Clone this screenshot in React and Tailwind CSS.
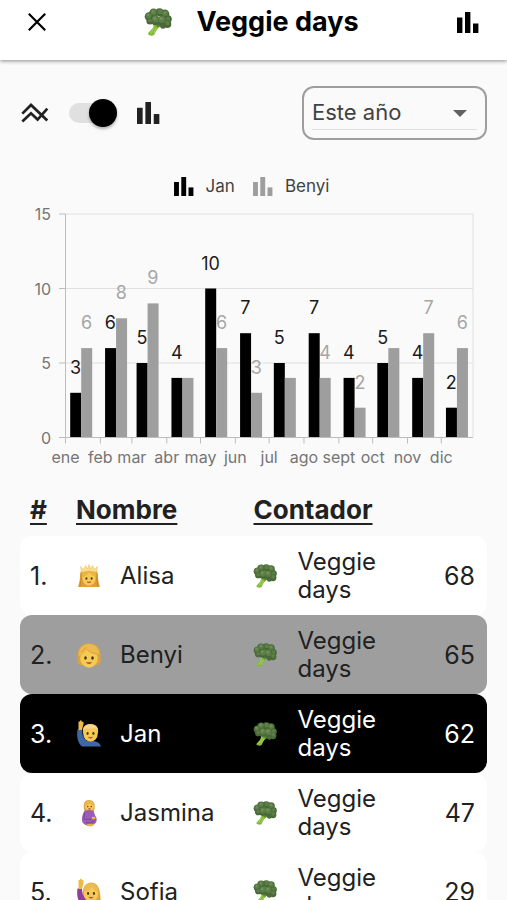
import { useState } from 'react';

const MONTHS = [
  { label: 'ene', days: 31, jan: 3, benyi: 6 },
  { label: 'feb', days: 28, jan: 6, benyi: 8 },
  { label: 'mar', days: 31, jan: 5, benyi: 9 },
  { label: 'abr', days: 30, jan: 4, benyi: 4, hideBenyi: true },
  { label: 'may', days: 31, jan: 10, benyi: 6 },
  { label: 'jun', days: 30, jan: 7, benyi: 3 },
  { label: 'jul', days: 31, jan: 5, benyi: 4, hideBenyi: true },
  { label: 'ago', days: 31, jan: 7, benyi: 4 },
  { label: 'sept', days: 30, jan: 4, benyi: 2 },
  { label: 'oct', days: 31, jan: 5, benyi: 6, hideBenyi: true },
  { label: 'nov', days: 30, jan: 4, benyi: 7 },
  { label: 'dic', days: 31, jan: 2, benyi: 6 },
];

const RANKING = [
  { name: 'Alisa', avatar: 'princess', count: 68, tone: 'bg-white text-[#212121]' },
  { name: 'Benyi', avatar: 'blond', count: 65, tone: 'bg-[#9e9e9e] text-[#212121]' },
  { name: 'Jan', avatar: 'manHand', count: 62, tone: 'bg-black text-white' },
  { name: 'Jasmina', avatar: 'pregnant', count: 47, tone: 'bg-white text-[#212121]' },
  { name: 'Sofia', avatar: 'womanHand', count: 29, tone: 'bg-white text-[#212121]' },
];

function BarsIcon({ className }) {
  return (
    <svg viewBox="0 0 22 21" className={className} fill="currentColor" aria-hidden="true">
      <rect x="0" y="5.5" width="5.4" height="15.5" />
      <rect x="8" y="0" width="5.4" height="21" />
      <rect x="16" y="11.5" width="5.4" height="9.5" />
    </svg>
  );
}

function LinesIcon({ className }) {
  return (
    <svg viewBox="0 0 28 22" className={className} fill="none" stroke="currentColor" strokeWidth="2.7" aria-hidden="true">
      <path d="M1.3 11.600 10 3 26.3 18.600" />
      <path d="M1.300 19.600 10 11.300 16.600 17.600 26.300 6.600" />
    </svg>
  );
}

function Broccoli({ className }) {
  return (
    <svg viewBox="0 0 28 28" className={className} aria-hidden="true">
      <path d="M9 15c1 3 .2 5-1.500 6.500-1.500 1.600-3.300 3-3.600 4.800 1.600 1.600 4.600 1.700 6.200.6 1.500-2.600 2-5 4.200-6.700l4-3.700z" fill="#83b93a" />
      <path d="M9.800 17c.5 3-1 5-3.300 8.500M14 18.500c-2 1.500-3.300 3.500-4.300 6.500" stroke="#a9d65a" strokeWidth="1" fill="none" />
      <path d="M10 14l3 5.500 4-1 4-2z" fill="#5d8f2c" />
      <g fill="#4a6838">
        <circle cx="5" cy="8.500" r="4.300" />
        <circle cx="9.500" cy="5" r="4.400" />
        <circle cx="15.500" cy="4.300" r="4" />
        <circle cx="21" cy="6" r="4.400" />
        <circle cx="24" cy="11" r="3.800" />
        <circle cx="23.300" cy="16" r="4" />
        <circle cx="18" cy="13" r="5.300" />
        <circle cx="6" cy="13" r="3.600" />
        <circle cx="11.500" cy="12.500" r="4.800" />
        <circle cx="19" cy="18" r="2.800" />
      </g>
      <g fill="#5c7f48">
        <circle cx="4.600" cy="7.600" r="2.800" />
        <circle cx="9.500" cy="4" r="2.900" />
        <circle cx="16" cy="3.500" r="2.600" />
        <circle cx="21.300" cy="5.300" r="2.900" />
        <circle cx="11.500" cy="11" r="3.500" />
        <circle cx="18" cy="11.500" r="3.600" />
        <circle cx="24.200" cy="10.500" r="2.100" />
        <circle cx="23.500" cy="15" r="2.300" />
        <circle cx="6" cy="12.500" r="2" />
      </g>
      <g fill="#739358">
        <circle cx="10.800" cy="10.200" r="1.500" />
        <circle cx="17.200" cy="10.500" r="1.600" />
        <circle cx="9" cy="3.400" r="1.200" />
        <circle cx="20.800" cy="4.600" r="1.200" />
        <circle cx="4" cy="7" r="1.100" />
      </g>
    </svg>
  );
}

function Face({ cx, cy, r }) {
  return (
    <g>
      <ellipse cx={cx} cy={cy} rx={r} ry={r * 1.1} fill="#f6cb55" />
      <ellipse cx={cx - r * 0.4} cy={cy} rx={r * 0.15} ry={r * 0.2} fill="#4a3414" />
      <ellipse cx={cx + r * 0.4} cy={cy} rx={r * 0.15} ry={r * 0.2} fill="#4a3414" />
      <path
        d={`M${cx - r * 0.3} ${cy + r * 0.52}q${r * 0.3} ${r * 0.3} ${r * 0.6} 0z`}
        fill="#b5512f"
        stroke="#b5512f"
        strokeWidth="0.5"
      />
    </g>
  );
}

function Avatar({ kind }) {
  return (
    <svg viewBox="0 0 26 28" className="h-7 w-[26px] shrink-0" aria-hidden="true">
      {kind === 'princess' && (
        <>
          <path d="M4 13C4 8 8 6.500 13 6.500S22 8 22 13c0 5 .5 7 2 12H2c1.500-5 2-7 2-12z" fill="#dda038" />
          <path d="M4 24c1-4 1.300-8 1.300-11M22 24c-1-4-1.300-8-1.300-11" stroke="#c58420" fill="none" />
          <Face cx={13} cy={16.500} r={6.500} />
          <path d="M5.500 15.500c3-1 6-2.500 8-5 1.500 2 4 3.500 7 4.500 0-5-3-7.500-7.500-7.500s-7.500 3-7.500 8z" fill="#e9b548" />
          <path d="M5.500 10.500 4.500 4.500l3 3 2-4 2.200 3.300L13 2.500l1.300 4.300L16.500 3.500l2 4 3-3L20.500 10.500c-5-2-10-2-15 0z" fill="#fbe08a" stroke="#dfa94a" strokeWidth=".4" />
        </>
      )}
      {kind === 'blond' && (
        <>
          <path d="M1.500 15C1 7 6 2.500 13 2.500S25 7 24.500 15c0 4 .5 6-2 9H3.500C1 21 1.500 19 1.500 15z" fill="#dda23a" />
          <Face cx={13} cy={17} r={8.800} />
          <path d="M3 15c3-1 6.500-3 8-6.500C13.500 11 18 13 23.500 13.500 23 7 19 3 13 3S2 8 3 15z" fill="#ecbb50" />
          <path d="M11 8.500c2.500 2.500 6 4 10.500 4.500M5 11c2-1 4-3 5-5" stroke="#cf9633" strokeWidth=".8" fill="none" />
        </>
      )}
      {kind === 'manHand' && (
        <>
          <path d="M1.500 9.500 6 9c0 5 1 9.500 5 12h6c4 .5 7 2 8 5.500H6C1.500 23 .5 16 1.500 9.500z" fill="#3e68a5" />
          <path d="M2.500 10V2c0-1 1.200-1 1.400 0L4 .8C4.400 0 5.600 0 5.700 1l.2 1C7 1.200 8 2 7.600 3.500L6 10z" fill="#efb945" />
          <path d="M7 13C6 7 9 4 14.500 4S23 7.500 22 13z" fill="#e2b04a" />
          <Face cx={14.500} cy={13.500} r={7.300} />
          <path d="M7 11C7 6.500 10 4.200 14.500 4.200s7.500 2.500 7.600 6.800c-1.500-2-2.500-3-4-3-3 .7-6 .5-8 0-1.500.5-2.300 1.500-3.100 3z" fill="#f2d692" />
        </>
      )}
      {kind === 'pregnant' && (
        <>
          <path d="M8 10C7 4 9 1 13 1s6.500 3 5.500 9l-1 4H9z" fill="#dfa540" />
          <Face cx={13.500} cy={7.500} r={4.300} />
          <path d="M8.800 7c3-.5 4.500-2 5-3 1 1.500 2.500 2.500 4.200 3 0-3.500-2-5.500-4.700-5.500S8.500 3.500 8.800 7z" fill="#e9b652" />
          <path d="M8.500 12c3-1.500 6-1.500 9 0 1 2 1 4 2.500 6 1.500 3 .5 6-2 7.500l-7 1C7 25 5.500 23 6 19c.5-3 1-5 2.500-7z" fill="#9b5cb4" />
          <path d="M8.500 14c0 3-1.500 5 .5 6.500l7-.5M10 23.500c3 1 6 0 8.500-2" stroke="#74408e" strokeWidth=".9" fill="none" />
          <ellipse cx="17.500" cy="19" rx="2" ry="1.200" fill="#efb843" />
          <ellipse cx="14" cy="26" rx="3.500" ry="1.300" fill="#e9b13e" />
        </>
      )}
      {kind === 'womanHand' && (
        <>
          <path d="M7 25C6 19 5 5 15 4.500 24 5 24 14 25 25z" fill="#dfa53a" />
          <path d="M1.500 10.500 6 10c0 5 1 9 5 11.500h6c4 .5 6 2 7 5H6C1.500 24 .5 16 1.500 10.500z" fill="#8e3f9e" />
          <path d="M2.500 11V2.500c0-1 1.200-1 1.400 0L4 1.200C4.400.3 5.600.3 5.700 1.400l.2 1C7 1.600 8 2.400 7.600 4L6 11z" fill="#efb945" />
          <Face cx={15} cy={15.500} r={7.300} />
          <path d="M7.500 14.500c4-1 7-3 8.500-5.500 1.500 3 4 4.500 6.500 5.500 0-6-3-9.500-7.500-9.500s-8 3.500-7.500 9.500z" fill="#ecbb50" />
        </>
      )}
    </svg>
  );
}

function Chart() {
  const left = 65.5;
  const right = 473;
  const base = 437.5;
  const unit = 14.9;
  const perDay = 1.125;
  const y = (value) => base - value * unit;

  let day = 0;
  const months = MONTHS.map((month) => {
    const x = left + day * perDay;
    day += month.days;
    return { ...month, x };
  });

  return (
    <svg viewBox="0 200 507 280" className="block h-auto w-full" role="img" aria-label="Veggie days">
      {[5, 10, 15].map((v) => (
        <line key={v} x1={left} x2={right} y1={y(v)} y2={y(v)} stroke="#e0e0e0" />
      ))}
      <line x1={right} x2={right} y1={y(15)} y2={base} stroke="#e0e0e0" />
      {[0, 5, 10, 15].map((v) => (
        <g key={v}>
          <line x1="59" x2={left} y1={y(v)} y2={y(v)} stroke="#bdbdbd" />
          <text x="51" y={y(v) + 6} textAnchor="end" fontSize="16" fill="#757575">{v}</text>
        </g>
      ))}
      {months.map((m) => (
        <g key={m.label}>
          <rect x={m.x + 4.7} y={y(m.jan)} width="11" height={m.jan * unit} fill="#000" />
          <rect x={m.x + 15.7} y={y(m.benyi)} width="11" height={m.benyi * unit} fill="#9e9e9e" />
          <line x1={m.x} x2={m.x} y1={base} y2={base + 6} stroke="#bdbdbd" />
          <text x={m.x} y="463" textAnchor="middle" fontSize="16" fill="#757575">{m.label}</text>
        </g>
      ))}
      <line x1={left} x2={left} y1={y(15)} y2={base} stroke="#bdbdbd" />
      <line x1={left} x2={right} y1={base} y2={base} stroke="#bdbdbd" />
      {months.map((m) => (
        <g key={m.label} textAnchor="middle" fontSize="18">
          {!m.hideBenyi && <text x={m.x + 21} y={y(m.benyi) - 19} fill="#a6a6a6">{m.benyi}</text>}
          <text x={m.x + 10} y={y(m.jan) - 19} fill="#1a1a1a">{m.jan}</text>
        </g>
      ))}
    </svg>
  );
}

export default function App() {
  const [bars, setBars] = useState(true);

  return (
    <div className="flex h-dvh flex-col bg-[#fafafa] font-['Inter',sans-serif] text-[#212121]">
      <header className="z-10 flex h-[60px] shrink-0 items-center justify-between bg-white px-7 pb-4 text-black shadow-[0_1px_4px_rgba(0,0,0,0.45)]">
        <button type="button" aria-label="Cerrar">
          <svg viewBox="0 0 18 18" className="size-[18px]" fill="none" stroke="currentColor" strokeWidth="2.2" aria-hidden="true">
            <path d="M.8.8l16.400 16.400M17.200.8.8 17.200" />
          </svg>
        </button>
        <h1 className="flex items-center gap-6 text-[27px] leading-8 font-bold">
          <Broccoli className="size-7" />
          Veggie days
        </h1>
        <button type="button" aria-label="Estadísticas">
          <BarsIcon className="h-[21px] w-[22px]" />
        </button>
      </header>

      <main className="flex-1 overflow-y-auto [scrollbar-width:none]">
        <div className="flex items-center justify-between px-5 pt-[26px]">
          <div className="flex items-center gap-5 pl-px">
            <LinesIcon className="h-[22px] w-7" />
            <label className="relative block h-7 w-12 cursor-pointer">
              <input
                type="checkbox"
                checked={bars}
                onChange={(e) => setBars(e.target.checked)}
                aria-label="Gráfico de barras"
                className="peer sr-only"
              />
              <span className="absolute inset-x-0 top-1 h-5 rounded-full bg-[#e0e0e0]" />
              <span className="absolute top-0 left-0 size-7 rounded-full bg-black shadow-[0_2px_3px_rgba(0,0,0,0.3)] peer-checked:right-0 peer-checked:left-auto" />
            </label>
            <BarsIcon className="h-[22px] w-[23px]" />
          </div>
          <div className="relative rounded-xl border-2 border-[#9e9e9e] px-2 pt-1 pb-2">
            <select
              aria-label="Periodo"
              defaultValue="year"
              className="block h-[38px] w-[165px] appearance-none border-b border-[#e0e0e0] bg-transparent pt-1 text-[22px] text-[#424242] outline-none"
            >
              <option value="year">Este año</option>
            </select>
            <svg viewBox="0 0 14 7" className="pointer-events-none absolute top-[22px] right-[18px] h-[7px] w-3.5" fill="#616161" aria-hidden="true">
              <path d="M0 0h14L7 7z" />
            </svg>
          </div>
        </div>

        <ul className="flex justify-center gap-[18px] pt-[34px] pr-1 pb-0.5 text-[17px] leading-6 text-[#424242]">
          <li className="flex items-center gap-3">
            <BarsIcon className="h-[19px] w-5 text-black" />
            Jan
          </li>
          <li className="flex items-center gap-3">
            <BarsIcon className="h-[19px] w-5 text-[#9e9e9e]" />
            Benyi
          </li>
        </ul>

        <Chart />

        <div className="px-5 pt-2.5">
          <table className="w-full table-fixed">
            <colgroup>
              <col className="w-[12%]" />
              <col className="w-[38%]" />
              <col className="w-[33%]" />
              <col className="w-[17%]" />
            </colgroup>
            <thead>
              <tr className="h-[46px] text-left align-top text-[26px] leading-10 underline decoration-2 underline-offset-4">
                <th className="pl-2.5 font-bold">#</th>
                <th className="font-bold">Nombre</th>
                <th colSpan={2} className="font-bold">Contador</th>
              </tr>
            </thead>
            <tbody>
              {RANKING.map((row, i) => (
                <tr key={row.name} className="h-[79px] text-[24px] leading-7">
                  <td className={`${row.tone} rounded-l-xl pl-2.5 text-[25px]`}>{i + 1}.</td>
                  <td className={row.tone}>
                    <div className="flex items-center gap-[18px]">
                      <Avatar kind={row.avatar} />
                      {row.name}
                    </div>
                  </td>
                  <td className={row.tone}>
                    <div className="flex items-center gap-5">
                      <Broccoli className="size-6 shrink-0" />
                      Veggie days
                    </div>
                  </td>
                  <td className={`${row.tone} rounded-r-xl pr-3 text-right text-[25px]`}>{row.count}</td>
                </tr>
              ))}
            </tbody>
          </table>
        </div>
      </main>
    </div>
  );
}
